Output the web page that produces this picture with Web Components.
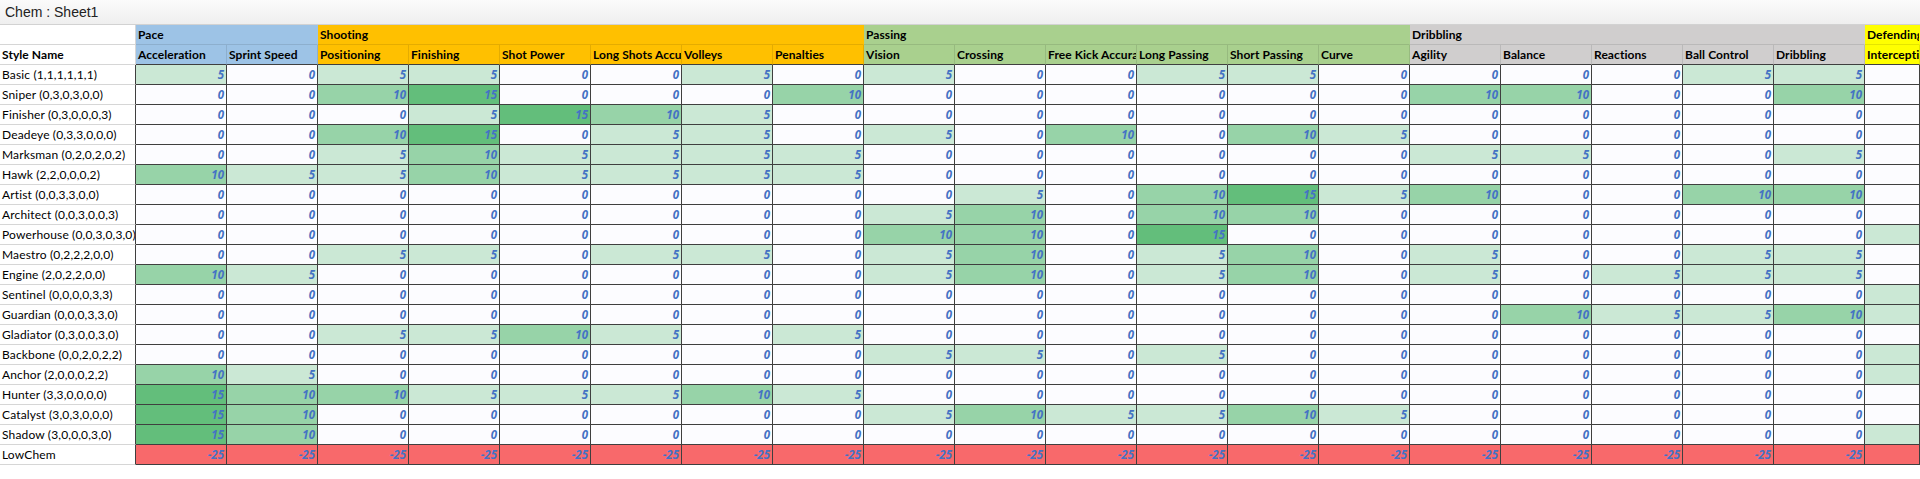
<!DOCTYPE html>
<html>
<head>
<meta charset="utf-8">
<title>Chem : Sheet1</title>
<style>
    html, body { margin: 0; background: #fff; overflow: hidden; }
</style>
</head>
<body>
<chem-viewer title-text="Chem : Sheet1"></chem-viewer>

<script>
class SheetTitle extends HTMLElement {
    connectedCallback() {
        if (this.shadowRoot) return;
        this.attachShadow({ mode: 'open' });
        this.shadowRoot.innerHTML = `
            <style>
                :host {
                    display: flex;
                    align-items: center;
                    height: 24px;
                    padding: 0 5px 1px;
                    box-sizing: border-box;
                    background: linear-gradient(#fbfbfb, #efefef);
                    font: 14px "Liberation Sans", Arial, sans-serif;
                    color: #222;
                }
            </style>
            <slot></slot>
        `;
    }
}

class SheetCell extends HTMLElement {
    connectedCallback() {
        if (this.shadowRoot) return;
        this.attachShadow({ mode: 'open' });
        this.shadowRoot.innerHTML = `
            <style>
                :host {
                    display: block;
                    box-sizing: border-box;
                    height: 20px;
                    min-width: 0;
                    padding: 0 2px;
                    overflow: hidden;
                    white-space: nowrap;
                    line-height: 19px;
                    font-family: Lato, "Open Sans", sans-serif;
                    font-size: 12px;
                    color: #000;
                    border-right: 1px solid #3f3f3f;
                    border-bottom: 1px solid #3f3f3f;
                }
                /* first column */
                :host([kind="label"]) {
                    border-bottom-color: #d6d6d6;
                    letter-spacing: .15px;
                }
                :host([kind="corner"]) {
                    font-weight: 700;
                    letter-spacing: .07px;
                    border-right-color: #d6d6d6;
                    border-bottom-color: #d6d6d6;
                }
                /* header cells */
                :host([kind="group"]), :host([kind="head"]) {
                    font-weight: 700;
                    letter-spacing: .07px;
                    background: var(--head);
                    border-right-color: rgba(0, 0, 0, .1);
                    border-bottom-color: rgba(0, 0, 0, .1);
                }
                :host([kind="group"]) { border-right-color: transparent; }
                :host([kind="head"]) { border-bottom-color: #3f3f3f; }
                :host([cat="pace"]) { --head: #9dc3e6; }
                :host([cat="shooting"]) { --head: #ffc000; }
                :host([cat="passing"]) { --head: #a9d08e; }
                :host([cat="dribbling"]) { --head: #d0cece; }
                :host([cat="defending"]) { --head: #ffff00; }
                /* value cells, colour scale */
                :host([kind="num"]) {
                    text-align: right;
                    font-family: "Open Sans", Lato, sans-serif;
                    font-size: 11.5px;
                    font-weight: 700;
                    font-style: italic;
                    color: #4472c4;
                    background: #fcfcff;
                }
                :host([shade="5"]) { background: #cbe8d5; }
                :host([shade="10"]) { background: #97d3a8; }
                :host([shade="15"]) { background: #63be7b; }
                :host([shade="-25"]) { background: #f8696b; }
            </style>
            <slot></slot>
        `;
    }
}

const GROUPS = [
    { cat: 'pace', name: 'Pace', cols: ['Acceleration', 'Sprint Speed'] },
    { cat: 'shooting', name: 'Shooting', cols: ['Positioning', 'Finishing', 'Shot Power', 'Long Shots Accu', 'Volleys', 'Penalties'] },
    { cat: 'passing', name: 'Passing', cols: ['Vision', 'Crossing', 'Free Kick Accura', 'Long Passing', 'Short Passing', 'Curve'] },
    { cat: 'dribbling', name: 'Dribbling', cols: ['Agility', 'Balance', 'Reactions', 'Ball Control', 'Dribbling'] },
    { cat: 'defending', name: 'Defending', cols: ['Intercepti'] }
];

// values per column, last number only colours the cut off Interceptions column
const ROWS = [
    ['Basic (1,1,1,1,1,1)',       '5 0  5 5 0 0 5 0  5 0 0 5 5 0  0 0 0 5 5  0'],
    ['Sniper (0,3,0,3,0,0)',      '0 0  10 15 0 0 0 10  0 0 0 0 0 0  10 10 0 0 10  0'],
    ['Finisher (0,3,0,0,0,3)',    '0 0  0 5 15 10 5 0  0 0 0 0 0 0  0 0 0 0 0  0'],
    ['Deadeye (0,3,3,0,0,0)',     '0 0  10 15 0 5 5 0  5 0 10 0 10 5  0 0 0 0 0  0'],
    ['Marksman (0,2,0,2,0,2)',    '0 0  5 10 5 5 5 5  0 0 0 0 0 0  5 5 0 0 5  0'],
    ['Hawk (2,2,0,0,0,2)',        '10 5  5 10 5 5 5 5  0 0 0 0 0 0  0 0 0 0 0  0'],
    ['Artist (0,0,3,3,0,0)',      '0 0  0 0 0 0 0 0  0 5 0 10 15 5  10 0 0 10 10  0'],
    ['Architect (0,0,3,0,0,3)',   '0 0  0 0 0 0 0 0  5 10 0 10 10 0  0 0 0 0 0  0'],
    ['Powerhouse (0,0,3,0,3,0)',  '0 0  0 0 0 0 0 0  10 10 0 15 0 0  0 0 0 0 0  5'],
    ['Maestro (0,2,2,2,0,0)',     '0 0  5 5 0 5 5 0  5 10 0 5 10 0  5 0 0 5 5  0'],
    ['Engine (2,0,2,2,0,0)',      '10 5  0 0 0 0 0 0  5 10 0 5 10 0  5 0 5 5 5  0'],
    ['Sentinel (0,0,0,0,3,3)',    '0 0  0 0 0 0 0 0  0 0 0 0 0 0  0 0 0 0 0  5'],
    ['Guardian (0,0,0,3,3,0)',    '0 0  0 0 0 0 0 0  0 0 0 0 0 0  0 10 5 5 10  5'],
    ['Gladiator (0,3,0,0,3,0)',   '0 0  5 5 10 5 0 5  0 0 0 0 0 0  0 0 0 0 0  0'],
    ['Backbone (0,0,2,0,2,2)',    '0 0  0 0 0 0 0 0  5 5 0 5 0 0  0 0 0 0 0  5'],
    ['Anchor (2,0,0,0,2,2)',      '10 5  0 0 0 0 0 0  0 0 0 0 0 0  0 0 0 0 0  5'],
    ['Hunter (3,3,0,0,0,0)',      '15 10  10 5 5 5 10 5  0 0 0 0 0 0  0 0 0 0 0  0'],
    ['Catalyst (3,0,3,0,0,0)',    '15 10  0 0 0 0 0 0  5 10 5 5 10 5  0 0 0 0 0  0'],
    ['Shadow (3,0,0,0,3,0)',      '15 10  0 0 0 0 0 0  0 0 0 0 0 0  0 0 0 0 0  5'],
    ['LowChem',                   Array(20).fill('-25').join(' ')]
];

class SheetTable extends HTMLElement {
    connectedCallback() {
        if (this.shadowRoot) return;
        this.attachShadow({ mode: 'open' });
        this.shadowRoot.innerHTML = `
            <style>
                :host { display: block; overflow: hidden; border-top: 1px solid #d2d2d2; }
                .grid {
                    display: grid;
                    grid-template-columns: 136px repeat(19, 91px) 1fr;
                    grid-auto-rows: 20px;
                }
            </style>
            <div class="grid"></div>
        `;
        const grid = this.shadowRoot.querySelector('.grid');

        const cell = (text, attrs) => {
            const el = document.createElement('sheet-cell');
            el.textContent = text;
            for (const k in attrs) el.setAttribute(k, attrs[k]);
            grid.appendChild(el);
            return el;
        };

        // group row
        cell('', { kind: 'corner' });
        GROUPS.forEach(g => {
            cell(g.name, { kind: 'group', cat: g.cat }).style.gridColumn = `span ${g.cols.length}`;
        });

        // column names
        cell('Style Name', { kind: 'corner' });
        GROUPS.forEach(g => g.cols.forEach(c => cell(c, { kind: 'head', cat: g.cat })));

        // data
        ROWS.forEach(([name, values]) => {
            cell(name, { kind: 'label' });
            values.trim().split(/\s+/).forEach((v, i) => {
                cell(i === 19 ? '' : v, { kind: 'num', shade: v });
            });
        });
    }
}

class ChemViewer extends HTMLElement {
    connectedCallback() {
        if (this.shadowRoot) return;
        this.attachShadow({ mode: 'open' });
        this.shadowRoot.innerHTML = `
            <style>
                :host { display: block; }
            </style>
            <sheet-title>${this.getAttribute('title-text')}</sheet-title>
            <sheet-table></sheet-table>
        `;
    }
}

customElements.define('sheet-title', SheetTitle);
customElements.define('sheet-cell', SheetCell);
customElements.define('sheet-table', SheetTable);
customElements.define('chem-viewer', ChemViewer);
</script>
</body>
</html>
